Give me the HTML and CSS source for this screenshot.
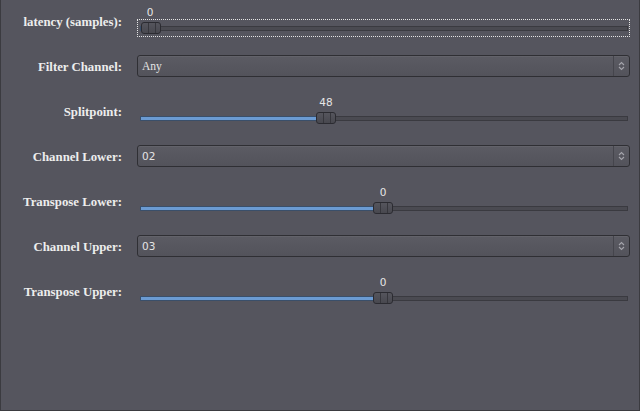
FILE: index.html
```html
<!DOCTYPE html>
<html>
<head>
<meta charset="utf-8">
<link rel="stylesheet" href="styles.css">
</head>
<body>
<div class="panel">
  <div class="form">
    <div class="label">latency (samples):</div>
    <div class="slider">
      <div class="value-row"><span class="spacer" style="width:0px"></span><span class="value">0</span></div>
      <div class="frame focused">
        <div class="track">
          <span class="fill" style="width:0px"></span>
          <span class="handle"></span>
          <span class="rest"></span>
        </div>
      </div>
    </div>

    <div class="label">Filter Channel:</div>
    <div class="combo">
      <span class="combo-text serif">Any</span>
      <span class="combo-arrow"><svg width="7" height="10" viewBox="0 0 7 10"><path d="M1 4 L3.5 1.5 L6 4 M1 6 L3.5 8.5 L6 6" fill="none" stroke="#a4a4ac" stroke-width="1.1"/></svg></span>
    </div>

    <div class="label">Splitpoint:</div>
    <div class="slider">
      <div class="value-row"><span class="spacer" style="width:176px"></span><span class="value">48</span></div>
      <div class="frame">
        <div class="track">
          <span class="fill" style="width:176px"></span>
          <span class="handle"></span>
          <span class="rest"></span>
        </div>
      </div>
    </div>

    <div class="label">Channel Lower:</div>
    <div class="combo">
      <span class="combo-text">02</span>
      <span class="combo-arrow"><svg width="7" height="10" viewBox="0 0 7 10"><path d="M1 4 L3.5 1.5 L6 4 M1 6 L3.5 8.5 L6 6" fill="none" stroke="#a4a4ac" stroke-width="1.1"/></svg></span>
    </div>

    <div class="label">Transpose Lower:</div>
    <div class="slider">
      <div class="value-row"><span class="spacer" style="width:233px"></span><span class="value">0</span></div>
      <div class="frame">
        <div class="track">
          <span class="fill" style="width:233px"></span>
          <span class="handle"></span>
          <span class="rest"></span>
        </div>
      </div>
    </div>

    <div class="label">Channel Upper:</div>
    <div class="combo">
      <span class="combo-text">03</span>
      <span class="combo-arrow"><svg width="7" height="10" viewBox="0 0 7 10"><path d="M1 4 L3.5 1.5 L6 4 M1 6 L3.5 8.5 L6 6" fill="none" stroke="#a4a4ac" stroke-width="1.1"/></svg></span>
    </div>

    <div class="label">Transpose Upper:</div>
    <div class="slider">
      <div class="value-row"><span class="spacer" style="width:233px"></span><span class="value">0</span></div>
      <div class="frame">
        <div class="track">
          <span class="fill" style="width:233px"></span>
          <span class="handle"></span>
          <span class="rest"></span>
        </div>
      </div>
    </div>
  </div>
</div>
</body>
</html>
```

FILE: styles.css
```css
html, body {
  margin: 0;
  padding: 0;
  background: #55555e;
}

.panel {
  width: 640px;
  height: 411px;
  box-sizing: border-box;
  background: #55555e;
  border-left: 1px solid #3b3b40;
  border-right: 1px solid #3b3b40;
  border-bottom: 1px solid #3b3b40;
}

.form {
  display: grid;
  grid-template-columns: 121px 493px;
  grid-auto-rows: 45px;
  column-gap: 15px;
}

.label {
  font-family: "Liberation Serif", "Times New Roman", serif;
  font-weight: bold;
  font-size: 12.8px;
  line-height: 15px;
  color: #ededed;
  text-align: right;
  padding-top: 15px;
  white-space: nowrap;
}

/* slider */
.slider {
  padding-top: 6px;
}

.value-row {
  display: flex;
  height: 13px;
}

.spacer {
  display: block;
  flex: none;
}

.value {
  display: block;
  width: 20px;
  flex: none;
  margin-left: 3px;
  text-align: center;
  font-family: "DejaVu Sans", sans-serif;
  font-size: 10.5px;
  line-height: 13px;
  color: #e6e6e6;
}

.frame {
  border: 1px dotted transparent;
  padding: 2px 1px 2px 2px;
}

.frame.focused {
  border-color: #e4e4e4;
}

.track {
  display: flex;
  align-items: center;
  height: 12px;
}

.fill {
  display: block;
  flex: none;
  height: 5px;
  box-sizing: border-box;
  background: #6b9bd3;
  border: 1px solid #3a4f6a;
  border-right: none;
  border-radius: 1px 0 0 1px;
}

.handle {
  display: block;
  flex: none;
  width: 20px;
  height: 12px;
  box-sizing: border-box;
  border: 1px solid #2b2b31;
  border-radius: 3px;
  background:
    linear-gradient(to right, transparent 6px, #36363c 6px, #36363c 7px, transparent 7px, transparent 13px, #36363c 13px, #36363c 14px, transparent 14px),
    linear-gradient(to bottom, #55555d, #48484f);
}

.rest {
  display: block;
  flex: 1;
  height: 5px;
  box-sizing: border-box;
  background: #4a4a51;
  border: 1px solid #3a3a40;
  border-left: none;
}

/* combo */
.combo {
  margin-top: 10px;
  height: 22px;
  box-sizing: border-box;
  border: 1px solid #2f2f34;
  border-radius: 3px;
  background: linear-gradient(to bottom, #5b5b63, #53535b);
  box-shadow: inset 0 1px 0 rgba(255, 255, 255, 0.05);
  display: flex;
  align-items: center;
}

.combo-text {
  flex: 1;
  padding-left: 4px;
  font-family: "DejaVu Sans", sans-serif;
  font-size: 10.5px;
  color: #e4e4e4;
  line-height: 20px;
}

.combo-text.serif {
  font-family: "Liberation Serif", "Times New Roman", serif;
  font-size: 11.5px;
}

.combo-arrow {
  flex: none;
  width: 15px;
  height: 20px;
  border-left: 1px solid #45454c;
  display: flex;
  align-items: center;
  justify-content: center;
}

.combo-arrow svg {
  display: block;
}
```
